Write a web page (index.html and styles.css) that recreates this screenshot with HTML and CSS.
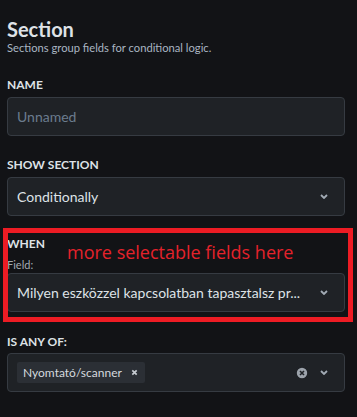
FILE: index.html
```html
<!DOCTYPE html>
<html lang="hu">
<head>
  <meta charset="UTF-8">
  <title>Section</title>
  <link rel="stylesheet" href="styles.css">
</head>
<body>
  <div class="panel">
    <header class="head">
      <h1>Section</h1>
      <p>Sections group fields for conditional logic.</p>
    </header>

    <div class="field">
      <label class="label">NAME</label>
      <input class="control" type="text" placeholder="Unnamed">
    </div>

    <div class="field show">
      <label class="label">SHOW SECTION</label>
      <div class="control select">
        <span class="value">Conditionally</span>
        <svg class="chevron" viewBox="0 0 8 5"><path d="M1 1l3 3 3-3"/></svg>
      </div>
    </div>

    <div class="field when">
      <label class="label">WHEN</label>
      <div class="sub">Field:</div>
      <div class="control select">
        <span class="value">Milyen eszközzel kapcsolatban tapasztalsz pr...</span>
        <svg class="chevron" viewBox="0 0 8 5"><path d="M1 1l3 3 3-3"/></svg>
      </div>
    </div>

    <div class="field anyof">
      <label class="label">IS ANY OF:</label>
      <div class="control select multi">
        <span class="tag">Nyomtató/scanner
          <svg class="tag-x" viewBox="0 0 8 8"><path d="M1.5 1.5l5 5M6.5 1.5l-5 5"/></svg>
        </span>
        <svg class="clear" viewBox="0 0 12 12">
          <circle cx="6" cy="6" r="6"/>
          <path d="M4 4l4 4M8 4l-4 4"/>
        </svg>
        <svg class="chevron" viewBox="0 0 8 5"><path d="M1 1l3 3 3-3"/></svg>
      </div>
    </div>
  </div>

  <div class="note">
    <span class="note-text">more selectable fields here</span>
  </div>
</body>
</html>
```

FILE: styles.css
```css
body {
  margin: 0;
  background: #121316;
  color: #dee2e6;
  font-family: Lato, 'Liberation Sans', sans-serif;
}
.panel {
  padding: 17px 12px 0 7px;
}
.head h1 {
  margin: 0;
  font-size: 20px;
  line-height: 24px;
  font-weight: 700;
  color: #dee2e6;
}
.head p {
  margin: 0;
  font-size: 11.2px;
  line-height: 14px;
  color: #a9b5c2;
}
.field {
  display: flex;
  flex-direction: column;
  margin-top: 21px;
}
.field:first-of-type {
  margin-top: 22px;
}
.show {
  margin-top: 21px;
}
.when {
  margin-top: 20px;
}
.anyof {
  margin-top: 22px;
}
.label {
  font-size: 12px;
  line-height: 16px;
  font-weight: 700;
  margin-bottom: 4px;
}
.when .label {
  margin-bottom: 6px;
}
.anyof .label {
  margin-bottom: 3px;
}
.sub {
  font-size: 11px;
  line-height: 14px;
  color: #a3aab2;
  margin-bottom: 1px;
}
.control {
  box-sizing: border-box;
  height: 39px;
  background: #1f2226;
  border: 1px solid #363b42;
  border-radius: 4px;
  padding: 0 9px;
  font-family: inherit;
  font-size: 14px;
  color: #dee2e6;
  outline: none;
}
.control::placeholder {
  color: #6b7c8e;
}
.select {
  display: flex;
  align-items: center;
}
.value {
  flex: 1;
  white-space: nowrap;
  overflow: hidden;
}
.chevron {
  width: 8px;
  height: 5px;
  margin-right: 7px;
  fill: none;
  stroke: #a2abb5;
  stroke-width: 1.8;
}
.multi {
  padding-left: 9px;
}
.tag {
  display: flex;
  align-items: center;
  height: 21px;
  padding: 0 7px 0 6px;
  background: #2b2f35;
  border-radius: 2px;
  font-size: 12px;
  color: #d4d9de;
  margin-right: auto;
}
.tag-x {
  width: 7px;
  height: 7px;
  margin-left: 9px;
  stroke: #c7ccd2;
  stroke-width: 1.9;
}
.clear {
  width: 12px;
  height: 12px;
  margin-right: 12px;
  fill: #9ca3ab;
  stroke: #1f2226;
  stroke-width: 1.6;
}
.note {
  position: absolute;
  left: 3px;
  top: 228px;
  width: 350px;
  height: 94px;
  box-sizing: border-box;
  border: 5px solid #ed1c24;
}
.note-text {
  position: absolute;
  left: 59px;
  top: 9px;
  font-family: 'Open Sans', sans-serif;
  font-size: 18px;
  line-height: 20px;
  color: #e4222b;
  white-space: nowrap;
}
```
